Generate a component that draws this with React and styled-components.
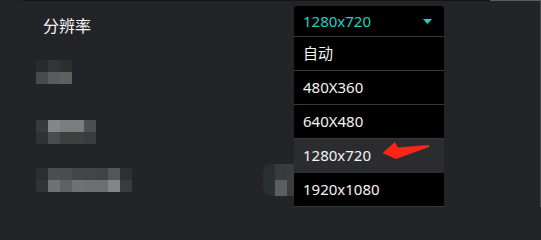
import React from 'react';
import styled, { createGlobalStyle } from 'styled-components';

const GlobalStyle = createGlobalStyle`
  html, body {
    margin: 0;
    padding: 0;
    background: #232427;
  }
  body {
    font-family: 'Noto Sans', 'Noto Sans CJK SC', sans-serif;
  }
`;

const Page = styled.div`
  position: relative;
  width: 540px;
  height: 207px;
  overflow: hidden;
  background: #232427;
  border-right: 1px solid #4b4c4e;
`;

/**
 * top edge
 */

const TopRule = styled.div`
  display: flex;
  height: 1px;
`;

const RuleSegment = styled.div`
  width: ${(props) => props.$w}px;
  flex: ${(props) => (props.$grow ? 1 : 'none')};
  background: ${(props) => props.$color};
`;

/**
 * settings rows
 */

const List = styled.div`
  display: flex;
  flex-direction: column;
  padding-left: 36px;
`;

const Row = styled.div`
  display: flex;
  align-items: ${(props) => props.$align || 'flex-start'};
  padding-top: ${(props) => props.$top}px;
`;

const Label = styled.div`
  width: 251px;
  padding-left: 7px;
  margin-top: 5px;
  line-height: 30px;
  font-size: 16px;
  color: #f4f4f4;
`;

const Mosaic = styled.div`
  display: grid;
  grid-template-columns: repeat(${(props) => props.$cols}, 12px);
  grid-auto-rows: ${(props) => props.$rowH || 12}px;
  margin-left: ${(props) => props.$left || 0}px;
  border-radius: ${(props) => props.$radius || 0}px;
  overflow: hidden;
`;

const Cell = styled.div`
  background: ${(props) => props.$c};
`;

/**
 * select
 */

const Select = styled.div`
  position: relative;
  width: 150px;
  background: #000;
  border-radius: 3px 3px 0 0;
  z-index: 2;
`;

const SelectHead = styled.div`
  display: flex;
  align-items: center;
  justify-content: space-between;
  height: 30px;
  padding: 0 12px 0 9px;
  border-bottom: 1px solid #38393b;
  font-size: 15px;
  color: #22d0c2;
`;

const Menu = styled.div`
  position: absolute;
  top: 100%;
  left: 0;
  width: 150px;
  background: #000;
`;

const Option = styled.div`
  position: relative;
  height: 33px;
  line-height: 33px;
  padding-left: 9px;
  border-bottom: 1px solid #38393b;
  font-size: 15px;
  color: #f4f4f4;
  background: ${(props) => (props.$active ? '#2b2c2f' : '#000')};
  border-bottom-color: ${(props) => (props.$active ? '#2b2c2f' : '#38393b')};
`;

const Pointer = styled.svg`
  position: absolute;
  left: 88px;
  top: 2px;
`;

const cellsA = [
  '#2a2b2d', '#333436', '#2d2e30',
  '#48494b', '#5a5b5c', '#5e5f60',
];
const cellsB = [
  '#38393b', '#858687', '#7b7c7c', '#7b7c7c', '#4d4e50',
  '#313234', '#4a4b4d', '#3e3f41', '#3e3f41', '#3a3b3d',
];
const cellsC = [
  '#2a2e30', '#4a4e50', '#4a4d50', '#444548', '#434446', '#414244', '#555658', '#2e2f31',
  '#323335', '#707172', '#5f6061', '#707172', '#6c6f71', '#6c6e6f', '#848586', '#3a3b3d',
];
const cellsD = [
  '#2b2e31', '#383b3e', '#3a3d40',
  '#2c2f32', '#5b5d5f', '#3a3d40',
];

const options = ['自动', '480X360', '640X480', '1280x720', '1920x1080'];

function Blur({ cells, cols, left, radius, rowH }) {
  return (
    <Mosaic $cols={cols} $left={left} $radius={radius} $rowH={rowH}>
      {cells.map((c, i) => (
        <Cell key={i} $c={c} />
      ))}
    </Mosaic>
  );
}

export default function App() {
  const current = '1280x720';

  return (
    <>
      <GlobalStyle />
      <Page>
        <TopRule>
          <RuleSegment $w={22} $color="#232427" />
          <RuleSegment $grow $color="#141517" />
          <RuleSegment $w={50} $color="#5c5d5f" />
        </TopRule>

        <List>
          <Row $top={5}>
            <Label>分辨率</Label>
            <Select>
              <SelectHead>
                {current}
                <svg width="9" height="5" viewBox="0 0 9 5">
                  <path d="M0 0H9L4.5 5Z" fill="#22d0c2" />
                </svg>
              </SelectHead>
              <Menu>
                {options.map((o) => (
                  <Option key={o} $active={o === current}>
                    {o}
                    {o === current && (
                      <Pointer width="48" height="19" viewBox="0 0 48 19">
                        <path
                          d="M0.5 12 L13 1 L16 6.5 L47 4 L47 6 L14 18 Z"
                          fill="#ff2418"
                        />
                      </Pointer>
                    )}
                  </Option>
                ))}
              </Menu>
            </Select>
          </Row>

          <Row $top={19}>
            <Blur cells={cellsA} cols={3} />
          </Row>
          <Row $top={36}>
            <Blur cells={cellsB} cols={5} />
          </Row>
          <Row $top={20} $align="center">
            <Blur cells={cellsC} cols={8} />
            <Blur cells={cellsD} cols={3} left={131} radius={8} rowH={16} />
          </Row>
        </List>
      </Page>
    </>
  );
}
